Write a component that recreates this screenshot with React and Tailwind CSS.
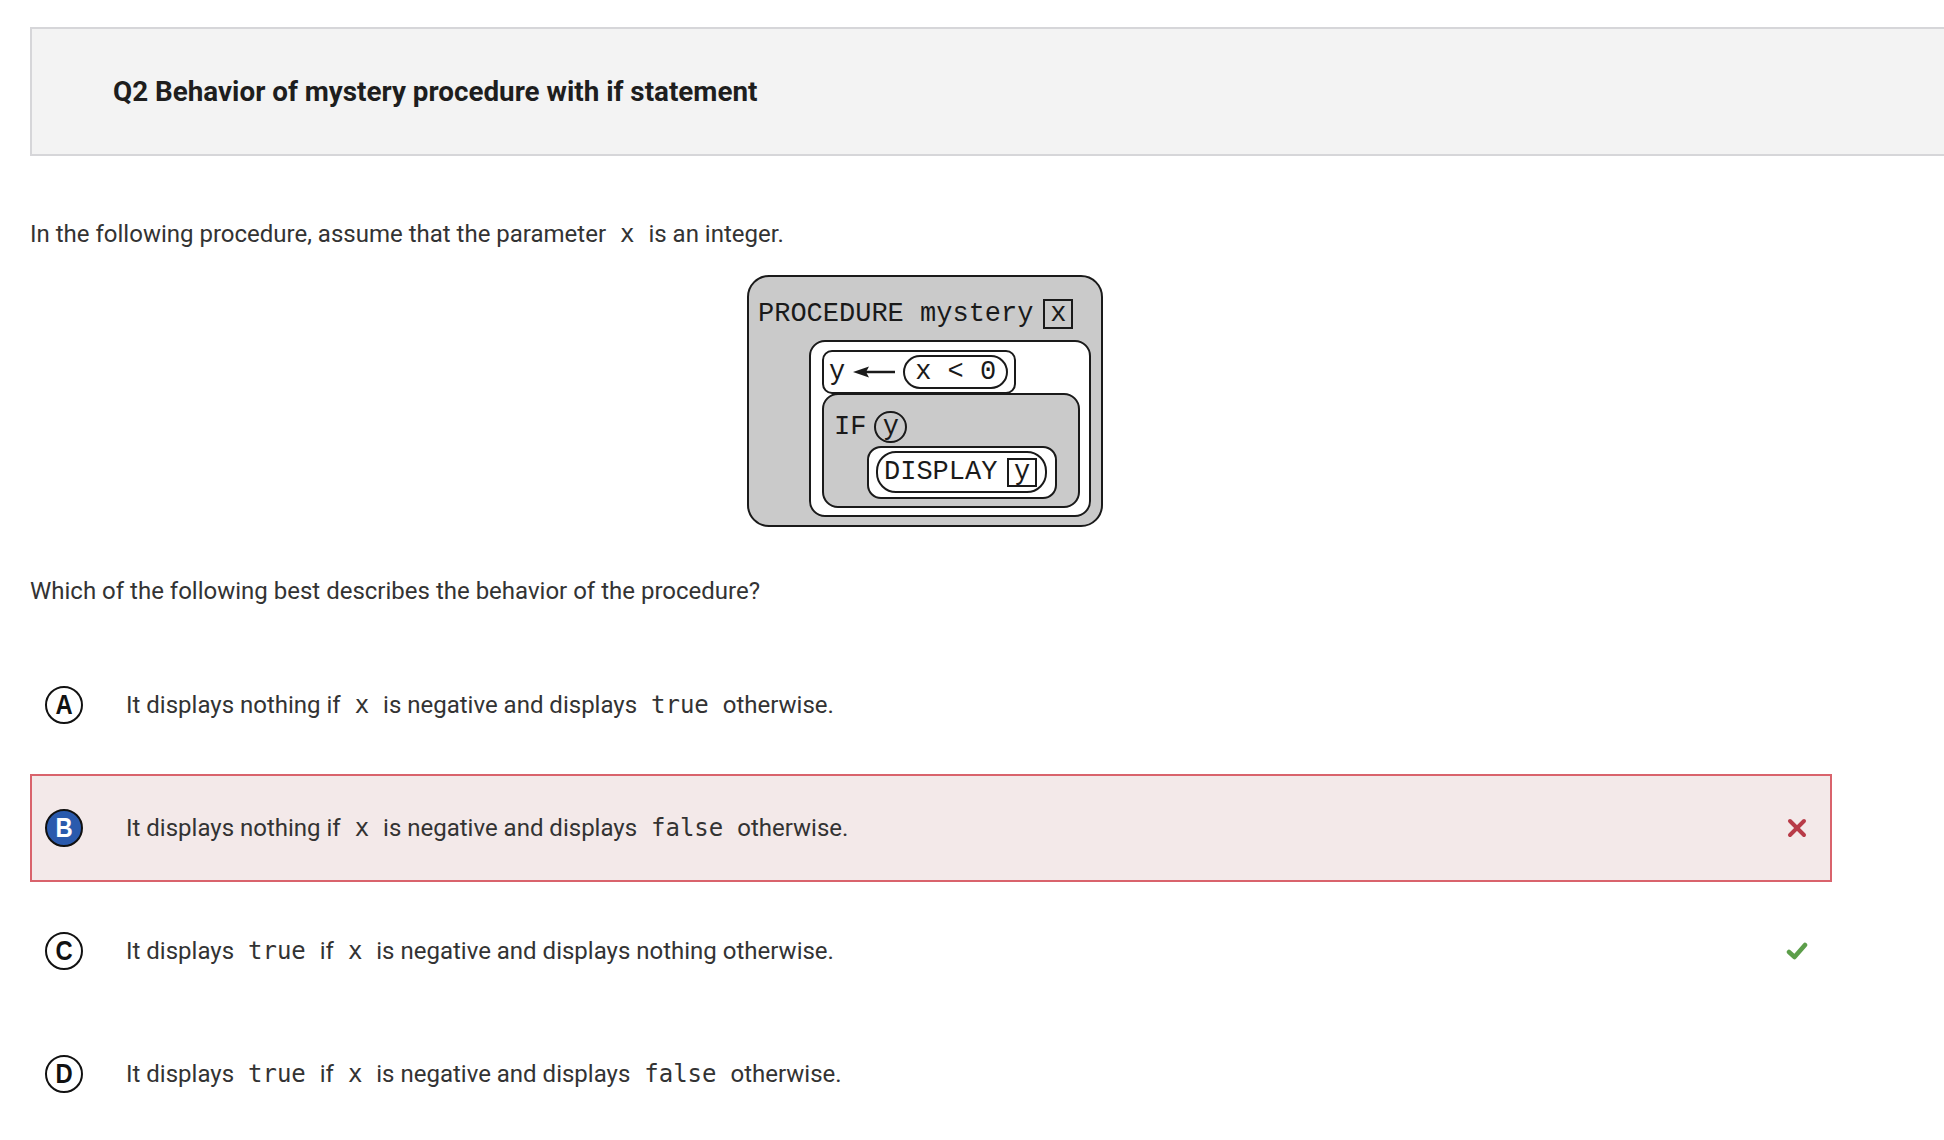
import React from "react";

const Mono = ({ children }) => (
  <span className="font-['DejaVu_Sans_Mono',monospace] text-[24px] px-[8px]">{children}</span>
);

function Diagram() {
  return (
    <div className="box-border w-[356px] h-[252px] rounded-[22px] border-2 border-[#1a1a1a] bg-[#cacaca] flex flex-col font-['Liberation_Mono',monospace] text-[27px] leading-none text-[#1a1a1a]">
      <div className="flex items-center ml-[9px] mt-[22px]">
        <span className="whitespace-pre">PROCEDURE mystery</span>
        <div className="box-border ml-[10px] w-[30px] h-[30px] border-2 border-[#1a1a1a] flex items-center justify-center">x</div>
      </div>
      <div className="box-border mt-[11px] ml-[60px] w-[282px] h-[177px] rounded-[16px] border-2 border-[#1a1a1a] bg-white flex flex-col">
        <div className="box-border ml-[11px] mt-[8px] w-[194px] h-[44px] rounded-[10px] border-2 border-[#1a1a1a] bg-white flex items-center pl-[5px]">
          <span>y</span>
          <svg width="42" height="14" viewBox="0 0 42 14" className="ml-[8px]">
            <line x1="12" y1="7" x2="42" y2="7" stroke="#1a1a1a" strokeWidth="2.5" />
            <polygon points="0,7 16,1.5 13,7 16,12.5" fill="#1a1a1a" />
          </svg>
          <div className="box-border ml-[8px] w-[105px] h-[34px] rounded-full border-2 border-[#1a1a1a] flex items-center justify-center whitespace-pre">x &lt; 0</div>
        </div>
        <div className="box-border ml-[11px] -mt-[1px] w-[258px] h-[115px] rounded-[16px] border-2 border-[#1a1a1a] bg-[#cacaca] flex flex-col">
          <div className="flex items-center ml-[10px] mt-[16px]">
            <span>IF</span>
            <div className="box-border ml-[8px] w-[33px] h-[32px] rounded-full border-2 border-[#1a1a1a] flex items-center justify-center">y</div>
          </div>
          <div className="box-border ml-[43px] mt-[3px] w-[190px] h-[53px] rounded-[14px] border-2 border-[#1a1a1a] bg-white pl-[7px] pt-[3px]">
            <div className="box-border w-[171px] h-[42px] rounded-[20px] border-2 border-[#1a1a1a] flex items-center pl-[6px]">
              <span>DISPLAY</span>
              <div className="box-border ml-auto mr-[8px] w-[30px] h-[29px] border-2 border-[#1a1a1a] flex items-center justify-center">y</div>
            </div>
          </div>
        </div>
      </div>
    </div>
  );
}

function Letter({ letter, selected }) {
  return (
    <div
      className={
        "box-border ml-[13px] w-[38px] h-[38px] rounded-full border-2 border-[#111] flex items-center justify-center font-['Liberation_Sans',sans-serif] font-bold text-[28px] leading-none " +
        (selected ? "bg-[#2a5aad] text-white" : "bg-white text-[#111]")
      }
    >
      <span className="inline-block scale-x-[0.85]">{letter}</span>
    </div>
  );
}

function XIcon() {
  return (
    <svg width="20" height="20" viewBox="0 0 20 20">
      <line x1="3" y1="3" x2="17" y2="17" stroke="#b83b48" strokeWidth="4" strokeLinecap="round" />
      <line x1="17" y1="3" x2="3" y2="17" stroke="#b83b48" strokeWidth="4" strokeLinecap="round" />
    </svg>
  );
}

function CheckIcon() {
  return (
    <svg width="22" height="20" viewBox="0 0 22 20">
      <polyline points="3,11 8.5,16 19,4" fill="none" stroke="#5c9e4a" strokeWidth="4.5" strokeLinecap="round" strokeLinejoin="round" />
    </svg>
  );
}

function Option({ letter, selected, icon, children }) {
  return (
    <div
      className={
        "box-border h-[108px] flex items-center border-2 " +
        (selected ? "border-[#d9636c] bg-[#f3e9e9]" : "border-transparent")
      }
    >
      <Letter letter={letter} selected={selected} />
      <div className="ml-[43px] text-[24px] text-[#333]">{children}</div>
      <div className="ml-auto mr-[22px] w-[22px] flex justify-center">
        {icon === "x" && <XIcon />}
        {icon === "check" && <CheckIcon />}
      </div>
    </div>
  );
}

export default function App() {
  return (
    <div className="min-h-screen bg-white pt-[27px] font-['Roboto',sans-serif]">
      <div className="box-border ml-[30px] h-[129px] border-y-2 border-l-2 border-[#d6d6d9] bg-[#f3f3f3] flex items-center pl-[81px]">
        <h1 className="text-[27.8px] font-bold text-[#1e1e1e]">Q2 Behavior of mystery procedure with if statement</h1>
      </div>
      <div className="ml-[30px] w-[1802px]">
        <p className="mt-[62px] text-[24px] leading-[32px] text-[#333]">
          In the following procedure, assume that the parameter <Mono>x</Mono> is an integer.
        </p>
        <div className="mt-[25px] flex justify-center pr-[12px]">
          <Diagram />
        </div>
        <p className="mt-[48px] text-[24px] leading-[32px] text-[#333]">
          Which of the following best describes the behavior of the procedure?
        </p>
        <div className="mt-[44px] flex flex-col gap-[15px]">
          <Option letter="A">
            It displays nothing if <Mono>x</Mono> is negative and displays <Mono>true</Mono> otherwise.
          </Option>
          <Option letter="B" selected icon="x">
            It displays nothing if <Mono>x</Mono> is negative and displays <Mono>false</Mono> otherwise.
          </Option>
          <Option letter="C" icon="check">
            It displays <Mono>true</Mono> if <Mono>x</Mono> is negative and displays nothing otherwise.
          </Option>
          <Option letter="D">
            It displays <Mono>true</Mono> if <Mono>x</Mono> is negative and displays <Mono>false</Mono> otherwise.
          </Option>
        </div>
      </div>
    </div>
  );
}
